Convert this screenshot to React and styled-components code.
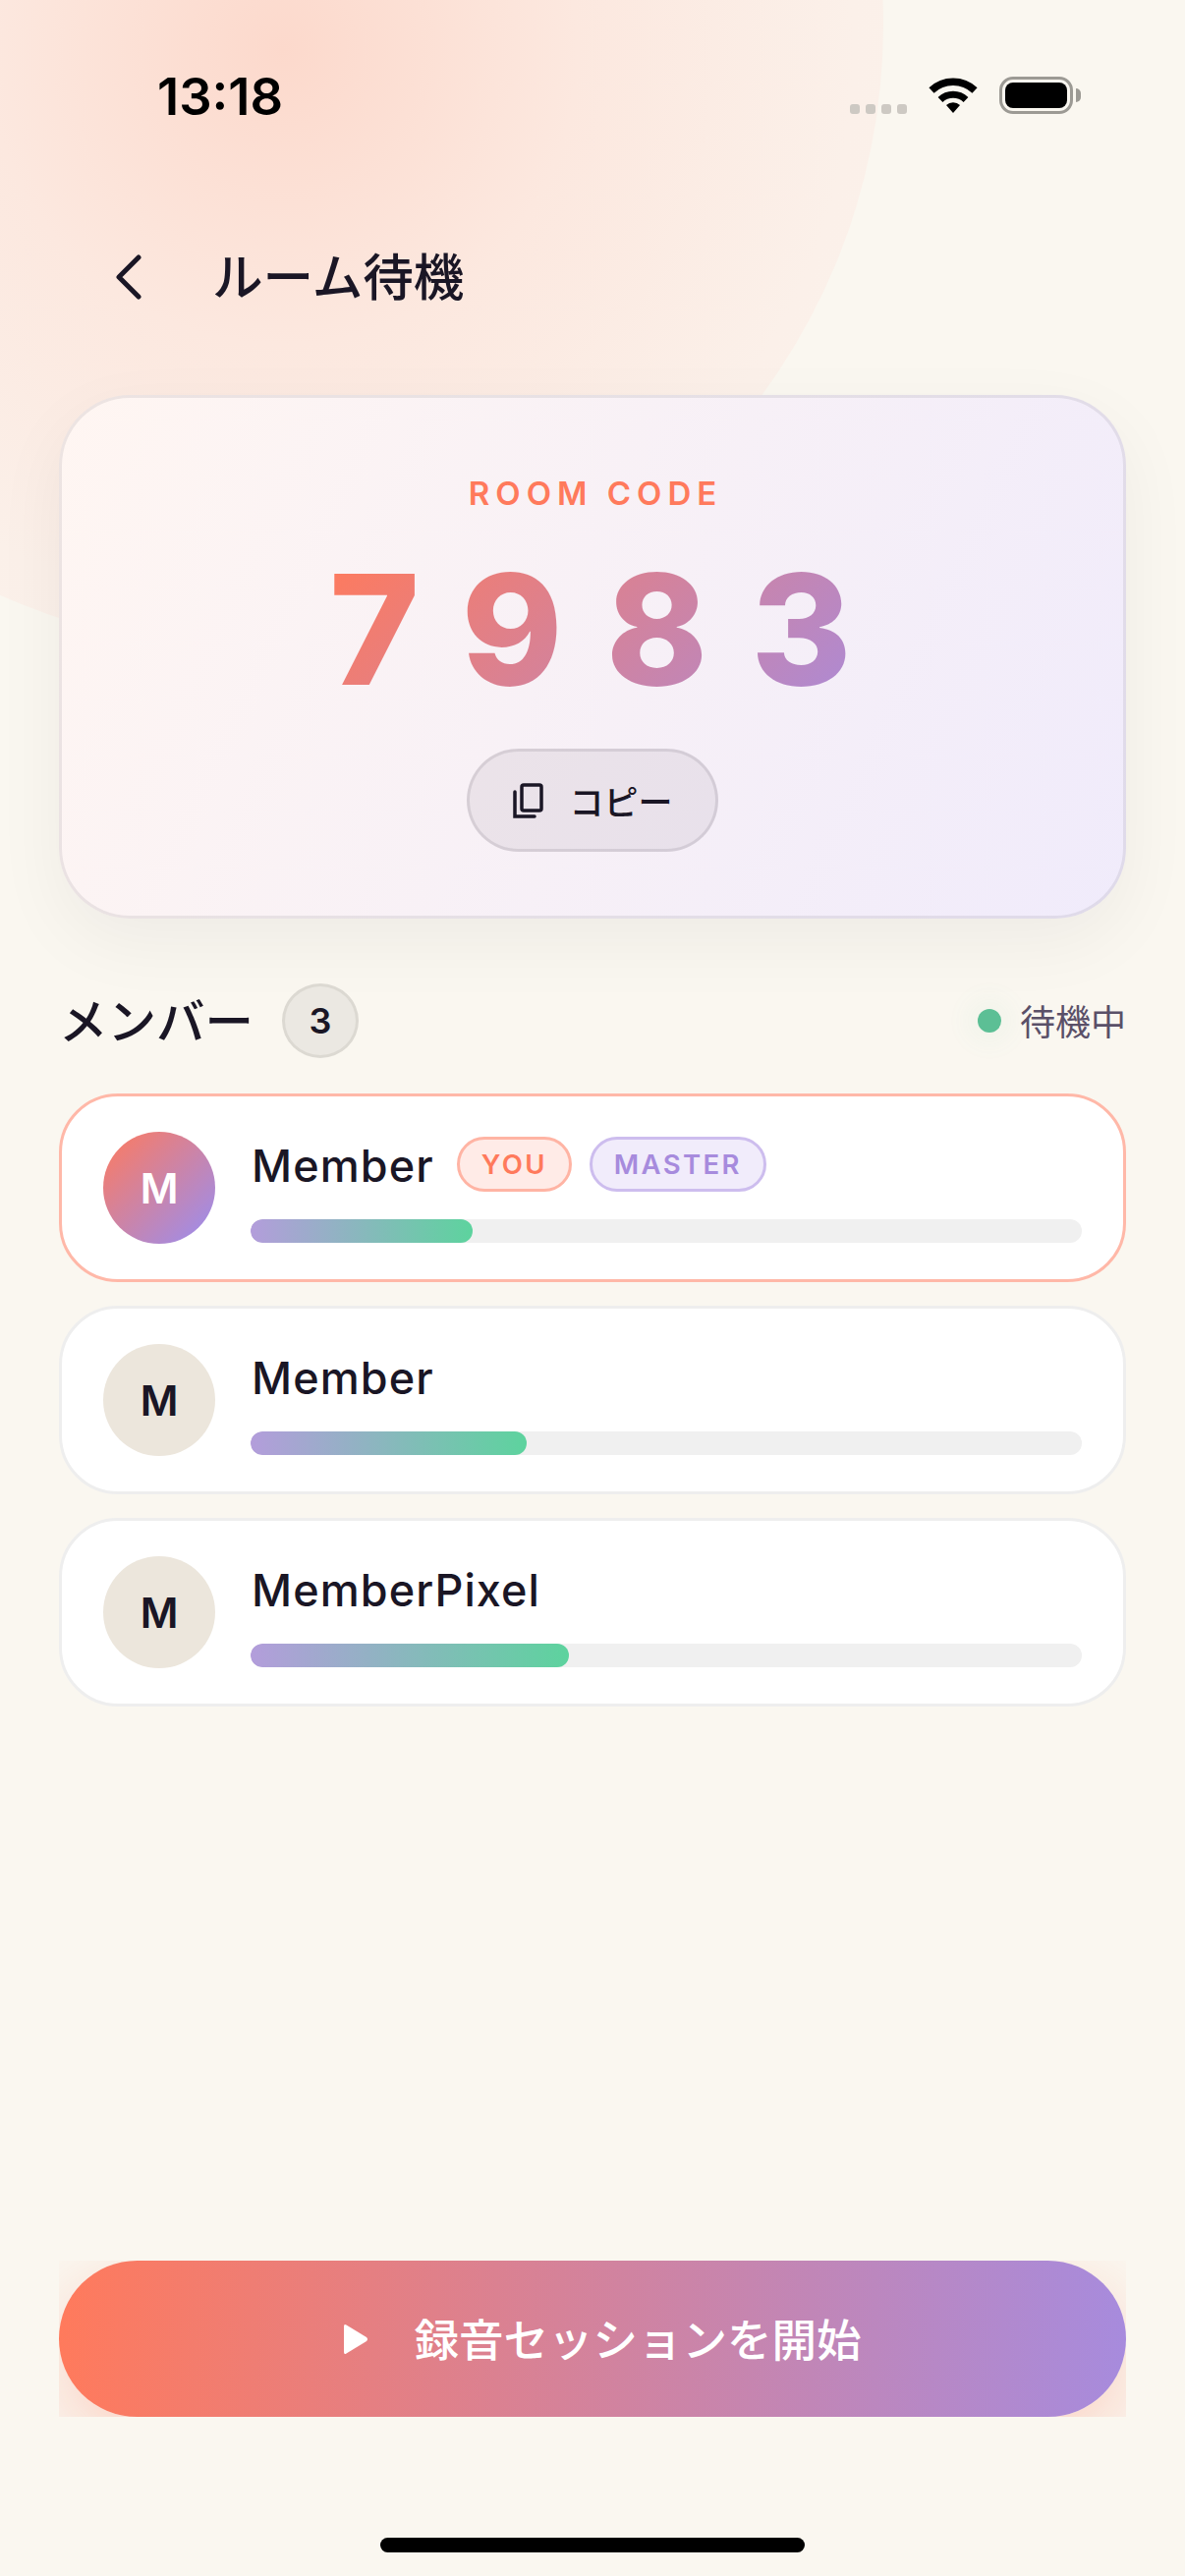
import styled, { createGlobalStyle } from "styled-components";

const members = [
  { name: "Member", progress: 26.7, self: true },
  { name: "Member", progress: 33.2 },
  { name: "MemberPixel", progress: 38.3 },
];

const GlobalStyle = createGlobalStyle`
  html, body {
    margin: 0;
    padding: 0;
    background: #faf7f0;
  }
  * {
    box-sizing: border-box;
  }
`;

const Page = styled.div`
  position: relative;
  width: 1206px;
  height: 2622px;
  overflow: hidden;
  display: flex;
  flex-direction: column;
  padding: 0 60px 24px;
  background: #faf7f0;
  color: #1a1625;
  font-family: Inter, "Noto Sans CJK JP", sans-serif;
`;

const Blob = styled.div`
  position: absolute;
  left: -375px;
  top: -612px;
  width: 1274px;
  height: 1274px;
  border-radius: 50%;
  background: radial-gradient(circle at 52% 52%, #fcd9cc 0%, #fce8df 32%, #fbf0e9 62%, #fbf3ed 100%);
`;

const StatusBar = styled.div`
  position: relative;
  height: 132px;
  display: flex;
  justify-content: space-between;
  align-items: flex-end;
  padding: 0 46px 16px 100px;
`;

const Time = styled.div`
  position: relative;
  top: 3px;
  font-size: 52.5px;
  font-weight: 600;
  line-height: 42px;
  height: 42px;
  color: #000;
`;

const StatusIcons = styled.div`
  display: flex;
  align-items: flex-end;
  gap: 22px;
`;

const SignalDots = styled.div`
  display: flex;
  gap: 6px;
`;

const SignalDot = styled.span`
  width: 10px;
  height: 10px;
  border-radius: 3px;
  background: #cdc9c3;
`;

const Battery = styled.div`
  position: relative;
  width: 75px;
  height: 38px;
  padding: 3px;
  border: 3px solid #9c9a94;
  border-radius: 14px;
  margin-right: 8px;

  &::before {
    content: "";
    display: block;
    height: 100%;
    border-radius: 8px;
    background: #000;
  }

  &::after {
    content: "";
    position: absolute;
    right: -11px;
    top: 9px;
    width: 5px;
    height: 14px;
    border-radius: 0 5px 5px 0;
    background: #9c9a94;
  }
`;

const Header = styled.header`
  position: relative;
  height: 80px;
  margin: 110px 0 80px;
  display: flex;
  align-items: center;
  gap: 70px;
  padding-left: 56px;
`;

const BackIcon = styled.svg`
  width: 30px;
  height: 46px;
  flex: none;
`;

const Title = styled.h1`
  margin: 0;
  font-size: 51.6px;
  font-weight: 500;
  line-height: 80px;
`;

const CodeCard = styled.section`
  position: relative;
  height: 533px;
  display: flex;
  flex-direction: column;
  align-items: center;
  padding-top: 77px;
  border: 3px solid rgba(26, 22, 37, 0.08);
  border-radius: 72px;
  background: linear-gradient(115deg, #fff6f2 0%, #f0ebfb 100%) border-box;
  box-shadow: 0 24px 72px rgba(26, 22, 37, 0.05);
`;

const CodeLabel = styled.div`
  font-size: 33px;
  font-weight: 600;
  line-height: 40px;
  letter-spacing: 6px;
  margin-right: -6px;
  color: #ff7a5c;
`;

const CodeDigits = styled.div`
  margin-top: 44px;
  margin-right: -40px;
  font-size: 156px;
  font-weight: 800;
  line-height: 150px;
  letter-spacing: 44px;
  background: linear-gradient(135deg, #ff7a5c 0%, #a78bdd 100%);
  -webkit-background-clip: text;
  background-clip: text;
  color: transparent;
`;

const CopyButton = styled.button`
  margin-top: 46px;
  width: 256px;
  height: 105px;
  display: flex;
  align-items: center;
  justify-content: center;
  gap: 26px;
  padding: 0;
  border: 3px solid rgba(26, 22, 37, 0.1);
  border-radius: 53px;
  background: rgba(26, 22, 37, 0.06);
  color: #1a1625;
  font-family: inherit;
  font-size: 35px;
  font-weight: 500;
`;

const CopyIcon = styled.svg`
  width: 32px;
  height: 38px;
  flex: none;
`;

const SectionRow = styled.div`
  position: relative;
  height: 76px;
  margin: 66px 0 36px;
  display: flex;
  align-items: center;
  justify-content: space-between;
`;

const SectionTitle = styled.div`
  display: flex;
  align-items: center;
  gap: 29px;
`;

const SectionName = styled.h2`
  margin: 0 0 5px;
  font-size: 49.5px;
  font-weight: 500;
`;

const CountBadge = styled.div`
  width: 78px;
  height: 76px;
  display: flex;
  align-items: center;
  justify-content: center;
  border: 3px solid #dcd9d2;
  border-radius: 50%;
  background: #ebe8e2;
  font-size: 36px;
  font-weight: 600;
`;

const Status = styled.div`
  display: flex;
  align-items: center;
  gap: 19px;
  color: #5a5068;
  font-size: 36px;
  font-weight: 400;
`;

const StatusDot = styled.span`
  width: 24px;
  height: 24px;
  border-radius: 50%;
  background: #5cbf95;
  box-shadow: 0 0 24px 12px rgba(92, 191, 149, 0.05);
`;

const StatusText = styled.span`
  margin-bottom: 3px;
`;

const MemberList = styled.div`
  display: flex;
  flex-direction: column;
  gap: 24px;
`;

const MemberCard = styled.div`
  height: 192px;
  display: flex;
  align-items: center;
  gap: 36px;
  padding: 0 42px;
  border: 3px solid ${(p) => (p.$self ? "#ffb8a8" : "#eeeeee")};
  border-radius: 60px;
  background: #fff;
`;

const Avatar = styled.div`
  width: 114px;
  height: 114px;
  flex: none;
  display: flex;
  align-items: center;
  justify-content: center;
  border-radius: 50%;
  background: ${(p) => (p.$self ? "linear-gradient(135deg, #ff7a5c 0%, #a78bdd 85%)" : "#ece6dc")};
  color: ${(p) => (p.$self ? "#fff" : "#1a1625")};
  font-size: 42px;
  font-weight: 600;
`;

const MemberInfo = styled.div`
  flex: 1;
  min-width: 0;
  padding-top: 4px;
`;

const NameRow = styled.div`
  height: 56px;
  display: flex;
  align-items: center;
  gap: 23px;
  margin-bottom: 27px;
`;

const MemberName = styled.div`
  padding: 2px 0 0 1px;
  font-size: 45px;
  font-weight: 500;
  letter-spacing: 1.1px;
`;

const Tag = styled.span`
  height: 56px;
  display: flex;
  align-items: center;
  padding: 0 22px;
  margin: -2px 0 0 ${(p) => (p.$tone === "master" ? "-5px" : "0")};
  border: 3px solid ${(p) => (p.$tone === "master" ? "#cdbdee" : "#ffb4a4")};
  border-radius: 28px;
  background: ${(p) => (p.$tone === "master" ? "#f1ecfb" : "#ffebe7")};
  color: ${(p) => (p.$tone === "master" ? "#a78bdd" : "#ff7a5c")};
  font-size: 27.5px;
  font-weight: 600;
  letter-spacing: 2.4px;
`;

const ProgressTrack = styled.div`
  height: 24px;
  border-radius: 12px;
  background: #f0f0f0;
  overflow: hidden;
`;

const ProgressFill = styled.div`
  height: 100%;
  border-radius: 12px;
  background: linear-gradient(90deg, #b39ddb 0%, #5dd39e 100%);
`;

const StartClip = styled.div`
  position: relative;
  margin-top: auto;
  height: 159px;
  overflow: hidden;
`;

const StartButton = styled.button`
  width: 100%;
  height: 100%;
  display: flex;
  align-items: center;
  justify-content: center;
  gap: 46px;
  padding: 0 0 0 20px;
  border: 0;
  border-radius: 80px;
  background: linear-gradient(90deg, #ff7a5c 0%, #a78bdd 100%);
  box-shadow: 0 24px 72px rgba(255, 122, 92, 0.3);
  color: #fff;
  font-family: inherit;
  font-size: 45.5px;
  font-weight: 500;
`;

const StartLabel = styled.span`
  margin-bottom: 4px;
`;

const PlayIcon = styled.svg`
  width: 26px;
  height: 32px;
  flex: none;
`;

const HomeIndicator = styled.div`
  position: relative;
  width: 432px;
  height: 15px;
  margin: 123px auto 0;
  border-radius: 8px;
  background: #000;
`;

function WifiIcon() {
  return (
    <svg width="50" height="38" viewBox="0 0 50 38" fill="none">
      <path d="M3 14 A32 32 0 0 1 47 14" stroke="#000" strokeWidth="7.5" />
      <path d="M12 23.5 A19 19 0 0 1 38 23.5" stroke="#000" strokeWidth="7" />
      <path d="M18 29 A10 10 0 0 1 32 29 L25 37 Z" fill="#000" />
    </svg>
  );
}

function MemberRow({ member }) {
  return (
    <MemberCard $self={member.self}>
      <Avatar $self={member.self}>M</Avatar>
      <MemberInfo>
        <NameRow>
          <MemberName>{member.name}</MemberName>
          {member.self && <Tag>YOU</Tag>}
          {member.self && <Tag $tone="master">MASTER</Tag>}
        </NameRow>
        <ProgressTrack>
          <ProgressFill style={{ width: `${member.progress}%` }} />
        </ProgressTrack>
      </MemberInfo>
    </MemberCard>
  );
}

export default function App() {
  return (
    <Page>
      <GlobalStyle />
      <Blob />
      <StatusBar>
        <Time>13:18</Time>
        <StatusIcons>
          <SignalDots>
            <SignalDot />
            <SignalDot />
            <SignalDot />
            <SignalDot />
          </SignalDots>
          <WifiIcon />
          <Battery />
        </StatusIcons>
      </StatusBar>

      <Header>
        <BackIcon viewBox="0 0 30 46" fill="none">
          <path d="M25 3 L5 23 L25 43" stroke="#1a1625" strokeWidth="5" strokeLinecap="round" strokeLinejoin="round" />
        </BackIcon>
        <Title>ルーム待機</Title>
      </Header>

      <CodeCard>
        <CodeLabel>ROOM CODE</CodeLabel>
        <CodeDigits>7983</CodeDigits>
        <CopyButton>
          <CopyIcon viewBox="0 0 32 38" fill="none" stroke="#1a1625" strokeWidth="3.5" strokeLinecap="round">
            <rect x="10" y="3" width="20" height="26" rx="2" />
            <path d="M3 10 V35 H23" />
          </CopyIcon>
          コピー
        </CopyButton>
      </CodeCard>

      <SectionRow>
        <SectionTitle>
          <SectionName>メンバー</SectionName>
          <CountBadge>3</CountBadge>
        </SectionTitle>
        <Status>
          <StatusDot />
          <StatusText>待機中</StatusText>
        </Status>
      </SectionRow>

      <MemberList>
        {members.map((member, i) => (
          <MemberRow key={i} member={member} />
        ))}
      </MemberList>

      <StartClip>
        <StartButton>
          <PlayIcon viewBox="0 0 26 32" fill="#fff">
            <path d="M1 3 Q1 0 3.5 1.5 L24 14 Q26 16 24 18 L3.5 30.5 Q1 32 1 29 Z" />
          </PlayIcon>
          <StartLabel>録音セッションを開始</StartLabel>
        </StartButton>
      </StartClip>

      <HomeIndicator />
    </Page>
  );
}
